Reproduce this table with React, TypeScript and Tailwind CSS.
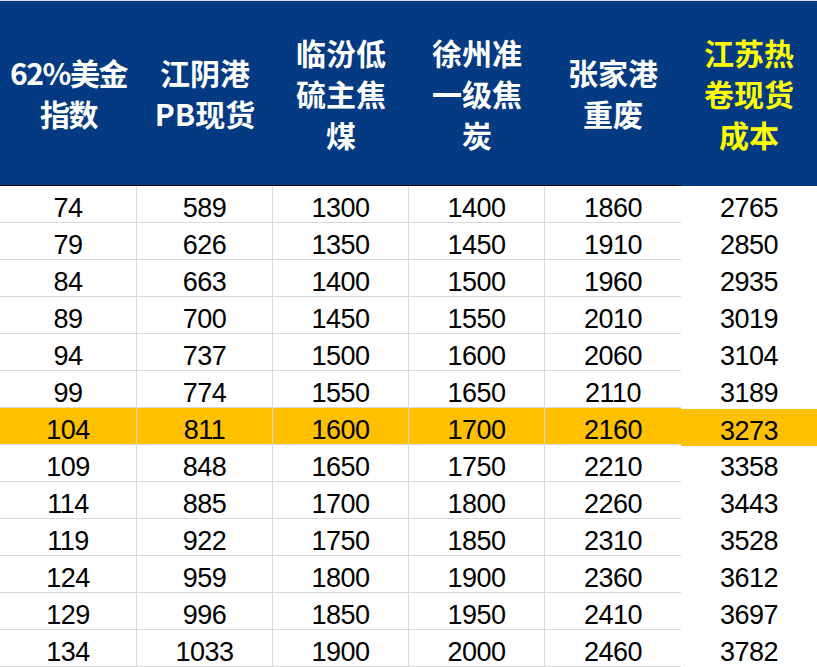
const headers = [
  ["62%美金", "指数"],
  ["江阴港", "PB现货"],
  ["临汾低", "硫主焦", "煤"],
  ["徐州准", "一级焦", "炭"],
  ["张家港", "重废"],
];

const costHeader = ["江苏热", "卷现货", "成本"];

const rows = [
  [74, 589, 1300, 1400, 1860, 2765],
  [79, 626, 1350, 1450, 1910, 2850],
  [84, 663, 1400, 1500, 1960, 2935],
  [89, 700, 1450, 1550, 2010, 3019],
  [94, 737, 1500, 1600, 2060, 3104],
  [99, 774, 1550, 1650, 2110, 3189],
  [104, 811, 1600, 1700, 2160, 3273],
  [109, 848, 1650, 1750, 2210, 3358],
  [114, 885, 1700, 1800, 2260, 3443],
  [119, 922, 1750, 1850, 2310, 3528],
  [124, 959, 1800, 1900, 2360, 3612],
  [129, 996, 1850, 1950, 2410, 3697],
  [134, 1033, 1900, 2000, 2460, 3782],
];

const widths = ["w-[137px]", "w-[136px]", "w-[136px]", "w-[136px]", "w-[136px]"];

export default function App() {
  return (
    <div className="w-[817px] h-[667px] overflow-hidden bg-white">
      {/* Top hairline */}
      <div className="h-px bg-[#dcdcdc]" />

      {/* Header */}
      <div className="flex">
        <div className="flex border-b border-black">
          {headers.map((lines, i) => (
            <div
              key={i}
              className={`${widths[i]} h-[184px] bg-[#033a82] flex flex-col items-center justify-center text-white text-[30px] leading-[41px] font-bold font-['Noto_Sans_CJK_SC','Noto_Sans',sans-serif] ${
                i === 0 ? "tracking-[-1.5px]" : ""
              }`}
            >
              {lines.map((l) => (
                <span key={l}>{l}</span>
              ))}
            </div>
          ))}
        </div>
        <div className="w-[136px] h-[185px] bg-[#033a82] flex flex-col items-center justify-center text-[#ffff00] text-[30px] leading-[41px] font-bold font-['Noto_Sans_CJK_SC','Noto_Sans',sans-serif]">
          {costHeader.map((l) => (
            <span key={l}>{l}</span>
          ))}
        </div>
      </div>

      {/* Body */}
      <div className="font-['Liberation_Sans',Arial,sans-serif] text-[27px] leading-[28px] tracking-[-0.5px] text-black">
        {rows.map((r, ri) => {
          const hl = r[0] === 104;
          return (
            <div key={ri} className="flex">
              {r.slice(0, 5).map((v, ci) => (
                <div
                  key={ci}
                  className={`${widths[ci]} h-[37px] border-b border-[#d9d9d9] pt-[8px] text-center ${
                    ci < 4 ? "border-r" : ""
                  } ${hl ? "bg-[#ffc000]" : ""}`}
                >
                  {v}
                </div>
              ))}
              <div
                className={`w-[136px] h-[37px] pt-[8px] text-center ${
                  hl ? "bg-[#ffc000] mt-px -mb-px" : ""
                }`}
              >
                {r[5]}
              </div>
            </div>
          );
        })}
      </div>
    </div>
  );
}
